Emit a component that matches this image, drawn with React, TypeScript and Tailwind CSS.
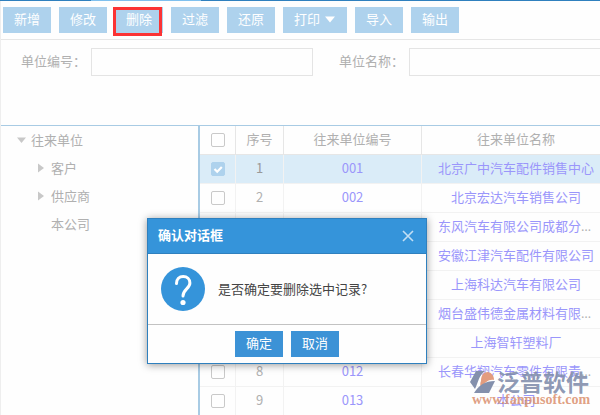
import React, { useState } from 'react';

const toolbarButtons = ['新增', '修改', '删除', '过滤', '还原', '打印', '导入', '输出'];

const rows = [
  { code: '001', name: '北京广中汽车配件销售中心' },
  { code: '002', name: '北京宏达汽车销售公司' },
  { code: '003', name: '东风汽车有限公司成都分公司' },
  { code: '004', name: '安徽江津汽车配件有限公司' },
  { code: '005', name: '上海科达汽车有限公司' },
  { code: '006', name: '烟台盛伟德金属材料有限公司' },
  { code: '011', name: '上海智轩塑料厂' },
  { code: '012', name: '长春华翔汽车零件有限责任公司' },
  { code: '013', name: '本公司' },
];

function Toolbar() {
  return (
    <div className="flex h-[39px] shrink-0 gap-2 border-b border-[#e6e6e6] pl-[2px] pt-[6px]">
      {toolbarButtons.map((label) => (
        <div key={label} className="relative shrink-0">
          <button
            type="button"
            className="flex h-[26px] items-center gap-1 bg-[#aed2ed] px-[11px] pb-[2px] text-white"
          >
            {label}
            {label === '打印' && (
              <svg width="12" height="8" viewBox="0 0 12 8" aria-hidden="true">
                <path d="M1 1.500h10L6 7.500z" fill="#fff" />
              </svg>
            )}
          </button>
          {label === '删除' && (
            <span className="pointer-events-none absolute -left-[2px] top-0 h-[29px] w-[49px] border-3 border-[#fb3334]" />
          )}
        </div>
      ))}
    </div>
  );
}

function FilterField({ id, label }: { id: string; label: string }) {
  return (
    <div className="flex shrink-0 items-start">
      <label htmlFor={id} className="w-[70px] leading-[26px]">
        {label}：
      </label>
      <input id={id} type="text" className="h-7 w-[222px] border border-[#e4e4e4] bg-[#fefefe] px-2 outline-none" />
    </div>
  );
}

function TreeItem({ label, open, arrow, level }: { label: string; open?: boolean; arrow?: boolean; level: number }) {
  return (
    <li className={level === 0 ? 'flex h-7 items-center pl-[14px]' : 'flex h-7 items-center pl-[34px]'}>
      <span className="flex w-4 items-center">
        {arrow && open && (
          <svg width="12" height="8" viewBox="0 0 12 8" aria-hidden="true">
            <path d="M2 1.500h9L6.500 7z" fill="#c8c8c8" />
          </svg>
        )}
        {arrow && !open && (
          <svg width="12" height="10" viewBox="0 0 12 10" aria-hidden="true">
            <path d="M3 0.500v9L9 5z" fill="#c8c8c8" />
          </svg>
        )}
      </span>
      {label}
    </li>
  );
}

function Tick({ checked, onChange, label }: { checked: boolean; onChange: () => void; label: string }) {
  return (
    <span className="grid place-items-center">
      <input
        type="checkbox"
        aria-label={label}
        checked={checked}
        onChange={onChange}
        className="col-start-1 row-start-1 size-[14px] appearance-none rounded-[2px] border border-[#c9c9c9] bg-[#fefefe] checked:border-[#aed2ed] checked:bg-[#aed2ed]"
      />
      {checked && (
        <svg
          className="pointer-events-none col-start-1 row-start-1"
          width="14"
          height="14"
          viewBox="0 0 14 14"
          fill="none"
          aria-hidden="true"
        >
          <path d="M3.500 7l2.700 2.700L10.800 5" stroke="#fff" strokeWidth="2.200" />
        </svg>
      )}
    </span>
  );
}

function PartnerTable() {
  const [selected, setSelected] = useState<string[]>(['001']);
  const toggle = (code: string) =>
    setSelected((s) => (s.includes(code) ? s.filter((c) => c !== code) : [...s, code]));
  const all = selected.length === rows.length;

  return (
    <table className="w-full min-w-[410px] table-fixed border-separate border-spacing-0 text-center">
      <colgroup>
        <col className="w-9" />
        <col className="w-12" />
        <col className="w-[138px]" />
        <col />
      </colgroup>
      <thead>
        <tr className="h-[29px]">
          <th className="border-b border-r border-[#e6e6e6] p-0">
            <Tick label="全选" checked={all} onChange={() => setSelected(all ? [] : rows.map((r) => r.code))} />
          </th>
          <th className="border-b border-r border-[#e6e6e6] p-0 pb-[2px] font-normal">序号</th>
          <th className="border-b border-r border-[#e6e6e6] p-0 pb-[2px] font-normal">往来单位编号</th>
          <th className="border-b border-[#e6e6e6] p-0 pb-[2px] font-normal">往来单位名称</th>
        </tr>
      </thead>
      <tbody>
        {rows.map((row, i) => {
          const on = selected.includes(row.code);
          return (
            <tr key={row.code} className={on ? 'h-[29px] bg-[#daecf8] text-[#999]' : 'h-[29px]'}>
              <td className="border-b border-r border-[#f2f2f2] p-0">
                <Tick label={row.name} checked={on} onChange={() => toggle(row.code)} />
              </td>
              <td className="border-b border-r border-[#f2f2f2] p-0 pb-[2px]">{i + 1}</td>
              <td className="border-b border-r border-[#f2f2f2] p-0 pb-[2px]">
                <a href="#" className="text-[#9a96fb]">{row.code}</a>
              </td>
              <td className="truncate border-b border-[#f2f2f2] px-4 pb-[2px] pt-0 font-['Open_Sans','Noto_Sans_CJK_SC',sans-serif]">
                <a href="#" className="text-[#9a96fb]">{row.name}</a>
              </td>
            </tr>
          );
        })}
      </tbody>
    </table>
  );
}

function ConfirmDialog() {
  return (
    <div
      role="dialog"
      aria-labelledby="confirm-title"
      className="absolute left-[147px] top-[218px] w-[280px] border border-[#2f80be] bg-[#fefefe] shadow-[0_1px_8px_rgba(0,0,0,0.4)]"
    >
      <div className="flex h-[35px] items-center justify-between border-b border-[#2f80be] bg-[#3594da] pl-[10px] pr-3 text-white">
        <h2 id="confirm-title" className="pb-[2px] font-bold">确认对话框</h2>
        <button type="button" aria-label="关闭">
          <svg width="12" height="12" viewBox="0 0 12 12" fill="none" aria-hidden="true">
            <path d="M1 1l10 10M11 1L1 11" stroke="#c3dff4" strokeWidth="1.600" />
          </svg>
        </button>
      </div>
      <div className="flex h-[71px] items-center gap-[13px] border-b border-[#c2c2c2] px-[13px] text-[#444]">
        <svg width="44" height="44" viewBox="0 0 44 44" fill="none" aria-hidden="true">
          <circle cx="22" cy="22" r="22" fill="#3594da" />
          <path
            d="M15.500 16.500c0-4.500 2.800-7 6.700-7s6.700 2.700 6.700 6.500c0 5.500-6.900 6.500-6.900 13"
            stroke="#fff"
            strokeWidth="3"
            strokeLinecap="round"
          />
          <circle cx="22" cy="35.500" r="2.600" fill="#fff" />
        </svg>
        <p>是否确定要删除选中记录?</p>
      </div>
      <div className="flex justify-center gap-2 py-[6px] text-white">
        <button type="button" className="h-[26px] bg-[#3c92d6] px-[11px] pb-[2px]">确定</button>
        <button type="button" className="h-[26px] bg-[#3c92d6] px-[11px] pb-[2px]">取消</button>
      </div>
    </div>
  );
}

function Watermark() {
  return (
    <div className="pointer-events-none absolute left-[470px] top-[369px] w-[124px]">
      <div className="flex h-[25px] items-center gap-px whitespace-nowrap text-[23px] font-bold leading-[25px] text-[#808cab]/90">
        <svg width="26" height="24" viewBox="0 0 26 24" className="shrink-0" aria-hidden="true">
          <path d="M6 1L15 1C9 5 8 13 5 19L0 12z" fill="#8490ac" />
          <path d="M11 11C11 5 14 2 18 2c4 1 6 4 6 8-5-1-9 2-13 8-1-3-1-5 0-7z" fill="#e39c7e" />
          <path d="M4 23C9 15 15 11 25 11l-6 12z" fill="#8490ac" />
        </svg>
        泛普软件
      </div>
      <div className="pl-[2px] font-['Liberation_Serif',serif] text-[14px] font-bold leading-[12px] text-[#dc9474]/90">
        www.fanpusoft.com
      </div>
    </div>
  );
}

export default function App() {
  return (
    <div className="relative flex h-screen flex-col overflow-hidden bg-[#fefefe] font-['Noto_Sans_CJK_SC',sans-serif] text-[13px] leading-[20px] text-[#b0b0b0]">
      <div className="flex h-px shrink-0 bg-[#2f80be]">
        <span className="ml-[91px] w-[110px] bg-[#7fc0ee]" />
      </div>
      <div className="flex min-h-0 grow flex-col border-l border-[#eeeeee]">
        <Toolbar />
        <form className="flex h-[85px] shrink-0 gap-[26px] overflow-hidden pl-5 pt-2">
          <FilterField id="unit-code" label="单位编号" />
          <FilterField id="unit-name" label="单位名称" />
        </form>
        <div className="flex min-h-0 grow border-t border-[#a8cbe4]">
          <ul className="w-[199px] shrink-0 border-r-2 border-[#a8cbe4]">
            <TreeItem label="往来单位" level={0} arrow open />
            <TreeItem label="客户" level={1} arrow />
            <TreeItem label="供应商" level={1} arrow />
            <TreeItem label="本公司" level={1} />
          </ul>
          <div className="min-w-0 grow overflow-hidden">
            <PartnerTable />
          </div>
        </div>
      </div>
      <ConfirmDialog />
      <Watermark />
    </div>
  );
}
